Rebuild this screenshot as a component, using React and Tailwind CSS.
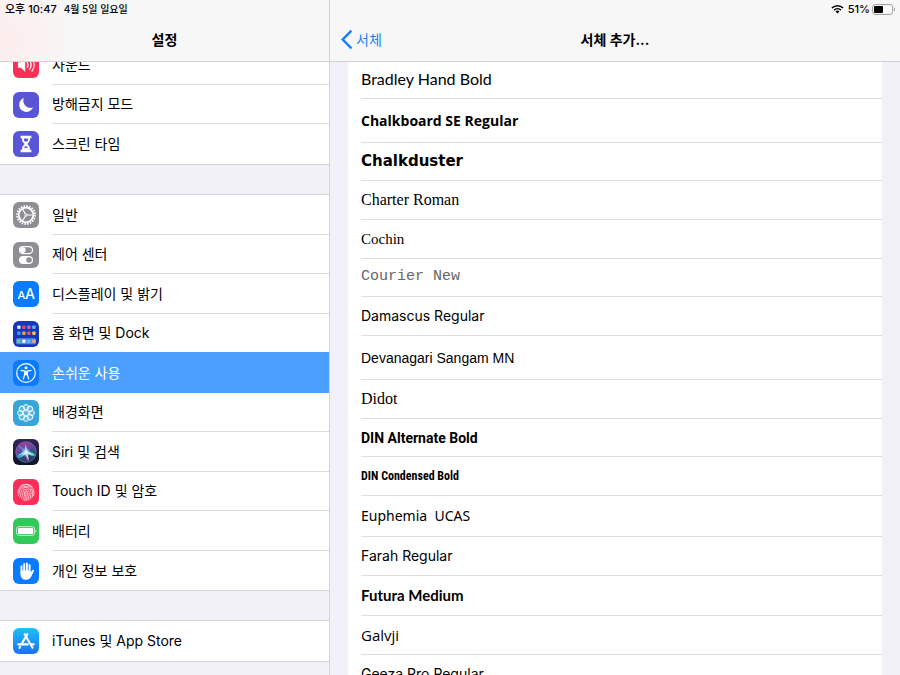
import React, { useState } from 'react'
import clsx from 'clsx'

function Tile({ color, children }) {
  return (
    <svg viewBox="0 0 26 26" className="w-[26px] h-[26px] shrink-0" aria-hidden="true">
      <rect width="26" height="26" rx="6" fill={color} />
      {children}
    </svg>
  )
}

function SoundIcon() {
  return (
    <Tile color="#fc2e57">
      <path d="M5 10.2h3L12.2 6v14L8 15.8H5z" fill="#fff" />
      <g fill="none" stroke="#fff" strokeWidth="1.3" strokeLinecap="round">
        <path d="M14.2 10.6c1 1.5 1 3.3 0 4.8" />
        <path d="M16.6 8.8c1.9 2.6 1.9 5.8 0 8.4" />
        <path d="M19 7c2.8 3.6 2.8 8.4 0 12" />
      </g>
    </Tile>
  )
}

function MoonIcon() {
  return (
    <Tile color="#5856d4">
      <path d="M10.8 6A7.2 7.2 0 1 0 20 15.6 7.4 7.4 0 0 1 10.8 6z" fill="#fff" />
    </Tile>
  )
}

function HourglassIcon() {
  return (
    <Tile color="#5856d4">
      <path d="M7.6 4.8h10.8v2.4H17c0 3-1.1 4.5-2.8 5.8 1.7 1.3 2.8 2.8 2.8 5.8h1.4v2.4H7.6v-2.4H9c0-3 1.1-4.5 2.8-5.8C10.1 11.7 9 10.2 9 7.2H7.6z" fill="#fff" />
      <path d="M10.8 7.6h4.4c0 1.300-.3 2.200-.8 3h-2.800c-.5-.8-.8-1.700-.8-3z" fill="#5856d4" />
      <path d="M13 14.800c-1 .8-1.800 1.500-2.200 2.700L13 16.600l2.200.9c-.4-1.200-1.200-1.900-2.200-2.700z" fill="#5856d4" />
    </Tile>
  )
}

function GearIcon() {
  return (
    <Tile color="#8e8e93">
      <circle cx="13" cy="13" r="9" fill="none" stroke="#fff" strokeWidth="1.8" strokeDasharray="1.55 1.277" />
      <circle cx="13" cy="13" r="7.3" fill="none" stroke="#fff" strokeWidth="1.8" />
      <path d="M13 13h6.6M13 13 9.7 7.3M13 13l-3.3 5.7" stroke="#fff" strokeWidth="1.2" />
      <circle cx="13" cy="13" r="1.5" fill="#fff" />
      <circle cx="13" cy="13" r=".7" fill="#8e8e93" />
    </Tile>
  )
}

function SwitchesIcon() {
  return (
    <Tile color="#8e8e93">
      <rect x="6.5" y="4.6" width="13" height="7" rx="3.5" fill="none" stroke="#fff" strokeWidth="1.1" />
      <circle cx="9.8" cy="8.1" r="2.8" fill="#fff" />
      <rect x="6" y="14" width="14" height="8" rx="4" fill="#fff" />
      <circle cx="16" cy="18" r="2.8" fill="#8e8e93" />
    </Tile>
  )
}

function DisplayIcon() {
  return (
    <Tile color="#087bff">
      <text x="4.5" y="18" fontSize="11" fill="#fff" className="font-['Inter',sans-serif] font-medium">A</text>
      <text x="12" y="18" fontSize="14" fill="#fff" className="font-['Inter',sans-serif] font-medium">A</text>
    </Tile>
  )
}

const appDots = [
  ['#dfe9ff', '#e7486b', '#c65fd0', '#54b6f5'],
  ['#3f9df5', '#f4a03c', '#eb5757', '#f2c84b'],
]

function HomeIcon() {
  return (
    <Tile color="#1438b8">
      {appDots.map((row, y) =>
        row.map((c, x) => (
          <rect key={`${y}-${x}`} x={4.2 + x * 5} y={4.5 + y * 6} width="3.4" height="3.4" rx=".8" fill={c} />
        ))
      )}
      <rect x="3" y="17.2" width="20" height="6" rx="1.5" fill="#5d85e0" />
      {['#5fd08b', '#e6efff', '#4fc3f7', '#f0a56c'].map((c, x) => (
        <rect key={c} x={4.2 + x * 5} y="18.5" width="3.4" height="3.4" rx=".8" fill={c} />
      ))}
    </Tile>
  )
}

function AccessibilityIcon() {
  return (
    <Tile color="#087bff">
      <circle cx="13" cy="13" r="9.3" fill="none" stroke="#fff" strokeWidth="1.2" />
      <circle cx="13" cy="7.7" r="1.5" fill="#fff" />
      <path d="M8 10.3l3.7.9v3.3L10.3 19M18 10.3l-3.7.9v3.3l1.4 4.5" fill="none" stroke="#fff" strokeWidth="1.2" strokeLinecap="round" strokeLinejoin="round" />
      <path d="M11.3 10.7h3.4v4.5h-3.4z" fill="#fff" />
    </Tile>
  )
}

function WallpaperIcon() {
  return (
    <Tile color="#36a5d8">
      <g fill="#ffffff" fillOpacity=".2" stroke="#e8f7ff" strokeWidth="1">
        {[0, 45, 90, 135, 180, 225, 270, 315].map(a => (
          <circle key={a} cx="13" cy="7.2" r="2.6" transform={`rotate(${a} 13 13)`} />
        ))}
        <circle cx="13" cy="13" r="2.8" />
      </g>
    </Tile>
  )
}

function SiriIcon() {
  return (
    <svg viewBox="0 0 26 26" className="w-[26px] h-[26px] shrink-0" aria-hidden="true">
      <defs>
        <linearGradient id="siriBg" x1="0" y1="0" x2="0" y2="1">
          <stop offset="0" stopColor="#35245a" />
          <stop offset="1" stopColor="#0b1524" />
        </linearGradient>
        <linearGradient id="siriOrb" x1="0.3" y1="0" x2="0.7" y2="1">
          <stop offset="0" stopColor="#a23a93" />
          <stop offset=".35" stopColor="#6a4a9e" />
          <stop offset=".65" stopColor="#2b4f86" />
          <stop offset="1" stopColor="#173a5c" />
        </linearGradient>
        <radialGradient id="siriGlow">
          <stop offset="0" stopColor="#fff" />
          <stop offset=".4" stopColor="#aef0ff" stopOpacity=".7" />
          <stop offset="1" stopColor="#5fd3ff" stopOpacity="0" />
        </radialGradient>
      </defs>
      <rect width="26" height="26" rx="6" fill="url(#siriBg)" />
      <circle cx="13" cy="13" r="10.3" fill="url(#siriOrb)" stroke="#8d86b5" strokeWidth=".6" />
      <path d="M13 13C10 17 7 20 4.5 18.5 3.5 16 8 13.5 13 13z" fill="#2bb8d6" opacity=".8" />
      <path d="M13 13c4-1 8 0 9.5 3-2 2-6.5.5-9.5-3z" fill="#35d6b4" opacity=".8" />
      <path d="M13 13c-2-3-4.5-6-7.5-6.5C7 10 10 12 13 13z" fill="#5a9bff" opacity=".7" />
      <path d="M13 13c2 3 3 6.5 2.5 9.5-2.500-1.500-3-6-2.500-9.500z" fill="#e24b9a" opacity=".9" />
      <path d="M4.5 16.5 12 12.3 12.5 5l1.800 7 7.200 4.500-7-1.500 1.500 6.500-3.800-6.300-5 3.500 3.500-4z" fill="#fff" opacity=".75" />
      <circle cx="13" cy="13.3" r="5" fill="url(#siriGlow)" />
    </svg>
  )
}

function TouchIdIcon() {
  return (
    <Tile color="#fc2e57">
      <g fill="none" stroke="#ffd5dd" strokeWidth=".9" strokeLinecap="round">
        <path d="M7 7.6a8.5 8.5 0 0 1 12 0" />
        <path d="M5 13.5a8 8 0 0 1 16 0c0 1.3-.1 2.3-.4 3.2" />
        <path d="M5.3 16.5c.6-1 .9-2 .9-3a6.8 6.8 0 0 1 13.2-1.6c.5 2.1.3 4.5-.4 6.8" />
        <path d="M6.7 18.3c1-1.5 1.3-3.2 1.3-4.800a5 5 0 0 1 10 0c0 2.400-.4 4.700-1.200 6.800" />
        <path d="M8.3 19.8c1-2 1.5-4.1 1.5-6.300a3.200 3.200 0 0 1 6.400 0c0 2.800-.5 5.300-1.500 7.700" />
        <path d="M10.1 20.9c1-2.3 1.4-4.8 1.4-7.400a1.500 1.500 0 0 1 3 0c0 2.900-.5 5.600-1.600 8.100" />
        <path d="M13 13.5c0 2.7-.4 5.2-1.4 7.7" />
      </g>
    </Tile>
  )
}

function BatteryTileIcon() {
  return (
    <Tile color="#34c759">
      <rect x="3.6" y="8.7" width="18" height="8.6" rx="2.2" fill="none" stroke="#d7f5df" strokeWidth=".9" />
      <rect x="5" y="10" width="15.2" height="6" rx="1" fill="#fff" />
      <path d="M22.7 11.5c.9.3.9 2.7 0 3z" fill="#fff" />
    </Tile>
  )
}

function HandIcon() {
  return (
    <Tile color="#087bff">
      <g stroke="#fff" strokeLinecap="round" strokeWidth="1.9">
        <path d="M8.5 8.2v7M11.2 5.9v8M13.9 5.5v8M16.6 7v8" />
      </g>
      <path d="M7.55 12.5h10v2.2l1.7-2.5c.7-.9 2-.4 1.6.7l-2.7 5.9c-1 2-2.7 3-5 3-3.5 0-5.6-2.2-5.6-5.6z" fill="#fff" />
    </Tile>
  )
}

function AppStoreIcon() {
  return (
    <Tile color="url(#storeBg)">
      <defs>
        <linearGradient id="storeBg" x1="0" y1="0" x2="0" y2="1">
          <stop offset="0" stopColor="#1fc0fb" />
          <stop offset="1" stopColor="#1d70f0" />
        </linearGradient>
      </defs>
      <g stroke="#fff" strokeWidth="2.1" strokeLinecap="round">
        <path d="M14.3 6.2 8.6 16.1M11.7 6.2l7.8 13.5" />
        <path d="M5.3 16.4h9.4M18.4 16.4h2.3" />
        <path d="M7 18.9l-.5.9" />
      </g>
    </Tile>
  )
}

const groups = [
  [
    { id: 'sound', label: '사운드', Icon: SoundIcon },
    { id: 'dnd', label: '방해금지 모드', Icon: MoonIcon },
    { id: 'screentime', label: '스크린 타임', Icon: HourglassIcon },
  ],
  [
    { id: 'general', label: '일반', Icon: GearIcon },
    { id: 'control', label: '제어 센터', Icon: SwitchesIcon },
    { id: 'display', label: '디스플레이 및 밝기', Icon: DisplayIcon },
    { id: 'home', label: '홈 화면 및 Dock', Icon: HomeIcon },
    { id: 'accessibility', label: '손쉬운 사용', Icon: AccessibilityIcon },
    { id: 'wallpaper', label: '배경화면', Icon: WallpaperIcon },
    { id: 'siri', label: 'Siri 및 검색', Icon: SiriIcon },
    { id: 'touchid', label: 'Touch ID 및 암호', Icon: TouchIdIcon },
    { id: 'battery', label: '배터리', Icon: BatteryTileIcon },
    { id: 'privacy', label: '개인 정보 보호', Icon: HandIcon },
  ],
  [{ id: 'store', label: 'iTunes 및 App Store', Icon: AppStoreIcon }],
]

const fonts = [
  { name: 'Bradley Hand Bold', row: 'h-[39px]', face: "font-['Lato',sans-serif] text-base" },
  { name: 'Chalkboard SE Regular', row: 'h-11', face: "font-['Open_Sans',sans-serif] font-bold text-sm" },
  { name: 'Chalkduster', row: 'h-[38px]', face: "font-['DejaVu_Sans',sans-serif] font-bold text-[15px]" },
  { name: 'Charter Roman', row: 'h-[39px]', face: "font-['Liberation_Serif',serif] text-base" },
  { name: 'Cochin', row: 'h-[39px]', face: "font-['Liberation_Serif',serif] text-[15px]" },
  { name: 'Courier New', row: 'h-[38px]', face: "font-['Liberation_Mono',monospace] text-[15px] text-[#666]" },
  { name: 'Damascus Regular', row: 'h-[39px]', face: "font-['Inter',sans-serif] text-sm" },
  { name: 'Devanagari Sangam MN', row: 'h-11', face: "font-['Liberation_Sans',sans-serif] text-sm" },
  { name: 'Didot', row: 'h-[39px]', face: "font-['Liberation_Serif',serif] text-base" },
  { name: 'DIN Alternate Bold', row: 'h-[38px]', face: "font-['Roboto',sans-serif] font-bold text-sm" },
  { name: 'DIN Condensed Bold', row: 'h-[39px]', face: "font-['Roboto_Condensed','Liberation_Sans_Narrow',sans-serif] font-bold text-xs" },
  { name: 'Euphemia  UCAS', row: 'h-[41px]', face: "font-['Noto_Sans',sans-serif] text-sm" },
  { name: 'Farah Regular', row: 'h-[39px]', face: "font-['Inter',sans-serif] text-sm" },
  { name: 'Futura Medium', row: 'h-10', face: "font-['Lato',sans-serif] font-bold text-[15px]" },
  { name: 'Galvji', row: 'h-[39px]', face: "font-['Open_Sans',sans-serif] text-[15px]" },
  { name: 'Geeza Pro Regular', row: 'h-[39px]', face: "font-['Inter',sans-serif] text-sm" },
]

function SettingsRow({ item, active, last, onSelect }) {
  const { label, Icon } = item
  return (
    <li className="odd:h-10 even:h-[39px]">
      <button
        type="button"
        onClick={onSelect}
        aria-current={active ? 'page' : undefined}
        className={clsx(
          'flex h-full w-full items-center pl-[13px] text-left',
          active && 'relative bg-[#4a9fff] text-white shadow-[0_-1px_0_#4a9fff]'
        )}
      >
        <Icon />
        <span
          className={clsx(
            'ml-[13px] flex h-full flex-1 items-center',
            !last && 'border-b',
            active ? 'border-[#4a9fff]' : 'border-[#dcdcdf]'
          )}
        >
          {label}
        </span>
      </button>
    </li>
  )
}

function Sidebar() {
  const [selected, setSelected] = useState('accessibility')

  return (
    <aside className="flex w-[330px] shrink-0 flex-col border-r border-[#d5d5d9] bg-[#f2f1f7]">
      <header className="shrink-0 border-b border-[#d2d2d5] bg-[#f7f7f7] bg-[radial-gradient(circle_at_0px_40px,#fdecec,#f7f7f7_80px)]">
        <div className="flex h-[18px] items-center gap-[7px] pl-[5px] font-medium leading-none">
          <span className="text-[11px]">오후 10:47</span>
          <span className="text-[10px]">4월 5일 일요일</span>
        </div>
        <h1 className="flex h-[43px] items-center justify-center text-sm font-bold">설정</h1>
      </header>

      <nav className="flex-1 overflow-hidden">
        {/* list is scrolled so that the first row sits partly under the title bar */}
        <div className="-mt-[17px] space-y-[29px] text-sm">
          {groups.map((items, i) => (
            <ul
              key={i}
              className={clsx('border-b border-[#d2d2d6] bg-white', i > 0 && 'border-t')}
            >
              {items.map((item, j) => (
                <SettingsRow
                  key={item.id}
                  item={item}
                  last={j === items.length - 1}
                  active={item.id === selected}
                  onSelect={() => setSelected(item.id)}
                />
              ))}
            </ul>
          ))}
        </div>
      </nav>
    </aside>
  )
}

function StatusIcons() {
  return (
    <div className="flex h-[18px] items-center justify-end pr-1 text-[11px] font-medium leading-none">
      <svg viewBox="0 0 14 10" className="mr-1 h-[10px] w-[13px]" aria-hidden="true">
        <g fill="none" stroke="#000" strokeWidth="1.7">
          <path d="M1 3.9a8.5 8.5 0 0 1 12 0" />
          <path d="M3.3 6.2a5.3 5.3 0 0 1 7.4 0" />
        </g>
        <path d="M7 9.8 4.9 7.7a3 3 0 0 1 4.2 0z" />
      </svg>
      <span>51%</span>
      <svg viewBox="0 0 24 11" className="ml-0.5 h-[11px] w-6" aria-hidden="true">
        <rect x=".6" y=".6" width="20" height="9.8" rx="2.6" fill="#fff" stroke="#999" />
        <rect x="2" y="2" width="9" height="7" rx="1" />
        <path d="M22 3.7c1.5.4 1.5 3.2 0 3.6z" fill="#999" />
      </svg>
    </div>
  )
}

function FontList() {
  return (
    <main className="flex min-w-0 flex-1 flex-col bg-[#f2f1f7]">
      <header className="shrink-0 border-b border-[#d2d2d5] bg-[#f7f7f7]">
        <StatusIcons />
        <div className="grid h-[43px] grid-cols-[1fr_auto_1fr] items-center text-sm">
          <button type="button" className="flex items-center gap-1 justify-self-start pl-[11px] text-[#157efb]">
            <svg viewBox="0 0 11 19" className="h-[19px] w-[11px]" aria-hidden="true">
              <path d="M9.700 1.300 1.700 9.500l8 8.200" fill="none" stroke="currentColor" strokeWidth="2.4" strokeLinecap="round" />
            </svg>
            서체
          </button>
          <h2 className="font-bold">서체 추가...</h2>
        </div>
      </header>

      <div className="flex-1 overflow-hidden px-[18px]">
        <ul className="-mt-0.5 bg-white pl-[13px]">
          {fonts.map(({ name, row, face }) => (
            <li key={name} className={clsx('border-b border-[#dededf]', row)}>
              <button type="button" className={clsx('h-full w-full whitespace-pre text-left', face)}>
                {name}
              </button>
            </li>
          ))}
        </ul>
      </div>
    </main>
  )
}

export default function App() {
  return (
    <div className="flex h-screen overflow-hidden font-['Inter','Noto_Sans_CJK_KR',sans-serif] text-black" lang="ko">
      <Sidebar />
      <FontList />
    </div>
  )
}
